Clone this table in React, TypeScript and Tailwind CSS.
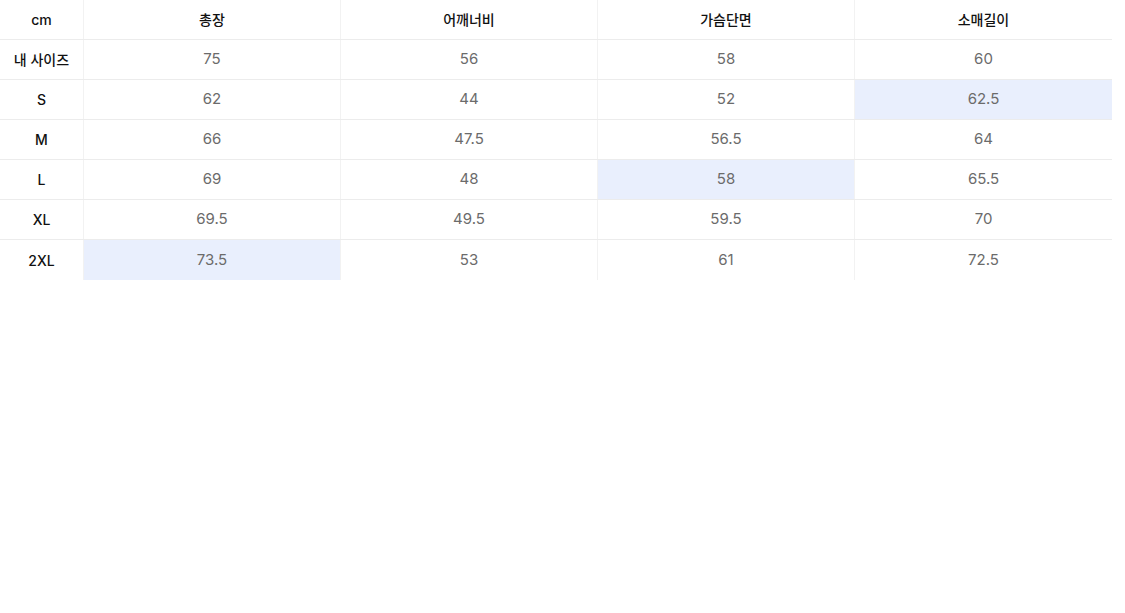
import React from "react";

const headers = ["총장", "어깨너비", "가슴단면", "소매길이"];
const rows: { label: string; values: string[]; hl?: number }[] = [
  { label: "내 사이즈", values: ["75", "56", "58", "60"] },
  { label: "S", values: ["62", "44", "52", "62.5"], hl: 3 },
  { label: "M", values: ["66", "47.5", "56.5", "64"] },
  { label: "L", values: ["69", "48", "58", "65.5"], hl: 2 },
  { label: "XL", values: ["69.5", "49.5", "59.5", "70"] },
  { label: "2XL", values: ["73.5", "53", "61", "72.5"], hl: 0 },
];

export default function App() {
  return (
    <div
      className="w-[1125px] h-[613px] bg-white"
      style={{ fontFamily: "Inter, 'Noto Sans CJK KR', sans-serif" }}
    >
      <div className="w-[1112px]">
        <div className="grid grid-cols-[83px_257px_257px_257px_258px] h-[40px] border-b border-[#ececec]">
          <div className="flex items-center justify-center text-[14px] font-medium text-[#111]">cm</div>
          {headers.map((h) => (
            <div
              key={h}
              className="flex items-center justify-center text-[14px] font-medium text-[#111] border-l border-[#f2f2f2]"
            >
              {h}
            </div>
          ))}
        </div>
        {rows.map((r, ri) => (
          <div
            key={r.label}
            className={`grid grid-cols-[83px_257px_257px_257px_258px] h-[40px] ${
              ri < rows.length - 1 ? "border-b border-[#ececec]" : ""
            }`}
          >
            <div className="flex items-center justify-center text-[14px] font-medium text-[#111]">
              {r.label}
            </div>
            {r.values.map((v, vi) => (
              <div
                key={vi}
                className={`flex items-center justify-center text-[15px] text-[#6b6b6b] border-l border-[#f2f2f2] ${
                  r.hl === vi ? "bg-[#e9effd]" : ""
                }`}
              >
                {v}
              </div>
            ))}
          </div>
        ))}
      </div>
    </div>
  );
}
